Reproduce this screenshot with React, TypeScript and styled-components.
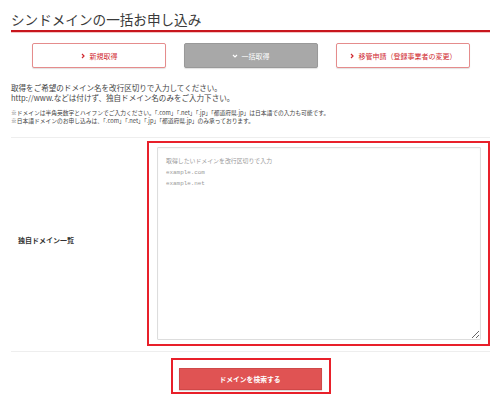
import React from "react";
import styled, { createGlobalStyle } from "styled-components";

const Global = createGlobalStyle`
  html, body { margin: 0; padding: 0; background: #fff; }
  body { font-family: "Noto Sans CJK JP", "Noto Sans", sans-serif; color: #333; }
  * { box-sizing: border-box; }
`;

const Page = styled.div`
  width: 500px;
  height: 394px;
  padding: 0 10px 0 11px;
  overflow: hidden;
`;

const Heading = styled.h1`
  margin: 0;
  padding: 9px 0 1px 0;
  font-size: 13.6px;
  line-height: 20px;
  font-weight: 400;
  color: #3a3a3a;
  border-bottom: 2px solid #c8161d;
  box-shadow: 0 1px 0 #f3c4c4;
`;

const Tabs = styled.div`
  display: flex;
  justify-content: center;
  gap: 18px;
  margin-top: 11px;
`;

const Tab = styled.div<{ $active?: boolean }>`
  width: 134px;
  height: 25px;
  display: flex;
  align-items: center;
  justify-content: center;
  gap: 4px;
  font-size: 7px;
  border-radius: 2px;
  border: 1px solid ${(p) => (p.$active ? "#999" : "#e58c8c")};
  background: ${(p) => (p.$active ? "#a8a8a8" : "#fff")};
  color: ${(p) => (p.$active ? "#fff" : "#d0282e")};
  box-shadow: 0 1px 1px rgba(0, 0, 0, 0.12);
`;

const Chevron = styled.svg`
  width: 6px;
  height: 6px;
`;

const Intro = styled.div`
  margin-top: 15px;
  font-size: 7.55px;
  line-height: 10px;
  color: #444;
`;

const Notes = styled.div`
  margin-top: 6px;
  font-size: 5.75px;
  line-height: 8px;
  color: #444;
`;

const Table = styled.div`
  margin-top: 12px;
  display: grid;
  grid-template-columns: 136px 1fr;
  border-top: 1px solid #eee;
  border-bottom: 1px solid #eee;
  padding: 3px 0 5px 0;
`;

const Label = styled.div`
  display: flex;
  align-items: center;
  padding: 0 0 8px 7px;
  font-size: 7px;
  font-weight: 700;
  color: #333;
`;

const Highlight = styled.div`
  border: 2px solid #e8202a;
  padding: 4px 7px 4px 8px;
`;

const Area = styled.textarea`
  display: block;
  width: 100%;
  height: 193px;
  border: 1px solid #ddd;
  border-radius: 1px;
  padding: 8px 8px;
  font-family: "Liberation Mono", "Noto Sans CJK JP", monospace;
  font-size: 5.9px;
  line-height: 11px;
  color: #333;
  background: #fff;
  box-shadow: inset 0 1px 2px rgba(0, 0, 0, 0.04);
  &::placeholder {
    color: #9a9a9a;
  }
`;

const Actions = styled.div`
  display: flex;
  justify-content: center;
  margin-top: 6px;
`;

const SubmitFrame = styled.div`
  border: 2px solid #e8202a;
  padding: 3px 7px 2px 6px;
`;

const Submit = styled.button`
  width: 143px;
  height: 22px;
  border: 1px solid #d04848;
  background: #e05353;
  color: #fff;
  font-family: "Noto Sans CJK JP", sans-serif;
  font-size: 6.8px;
  font-weight: 700;
  box-shadow: 0 1px 1px rgba(0, 0, 0, 0.15);
  cursor: pointer;
`;

const Right = () => (
  <Chevron viewBox="0 0 6 6">
    <path d="M2 1 L4 3 L2 5" fill="none" stroke="currentColor" strokeWidth="1.2" />
  </Chevron>
);
const Down = () => (
  <Chevron viewBox="0 0 6 6">
    <path d="M1 2 L3 4 L5 2" fill="none" stroke="currentColor" strokeWidth="1.2" />
  </Chevron>
);

export default function App() {
  return (
    <>
      <Global />
      <Page>
        <Heading>シンドメインの一括お申し込み</Heading>
        <Tabs>
          <Tab>
            <Right />
            新規取得
          </Tab>
          <Tab $active>
            <Down />
            一括取得
          </Tab>
          <Tab>
            <Right />
            移管申請（登録事業者の変更）
          </Tab>
        </Tabs>
        <Intro>
          取得をご希望のドメイン名を改行区切りで入力してください。
          <br />
          http://www.などは付けず、独自ドメイン名のみをご入力下さい。
        </Intro>
        <Notes>
          ※ドメインは半角英数字とハイフンでご入力ください。「.com」「.net」「.jp」「都道府県.jp」は日本語での入力も可能です。
          <br />
          ※日本語ドメインのお申し込みは、「.com」「.net」「.jp」「都道府県.jp」のみ承っております。
        </Notes>
        <Table>
          <Label>独自ドメイン一覧</Label>
          <Highlight>
            <Area placeholder={"取得したいドメインを改行区切りで入力\nexample.com\nexample.net"} />
          </Highlight>
        </Table>
        <Actions>
          <SubmitFrame>
            <Submit>ドメインを検索する</Submit>
          </SubmitFrame>
        </Actions>
      </Page>
    </>
  );
}
